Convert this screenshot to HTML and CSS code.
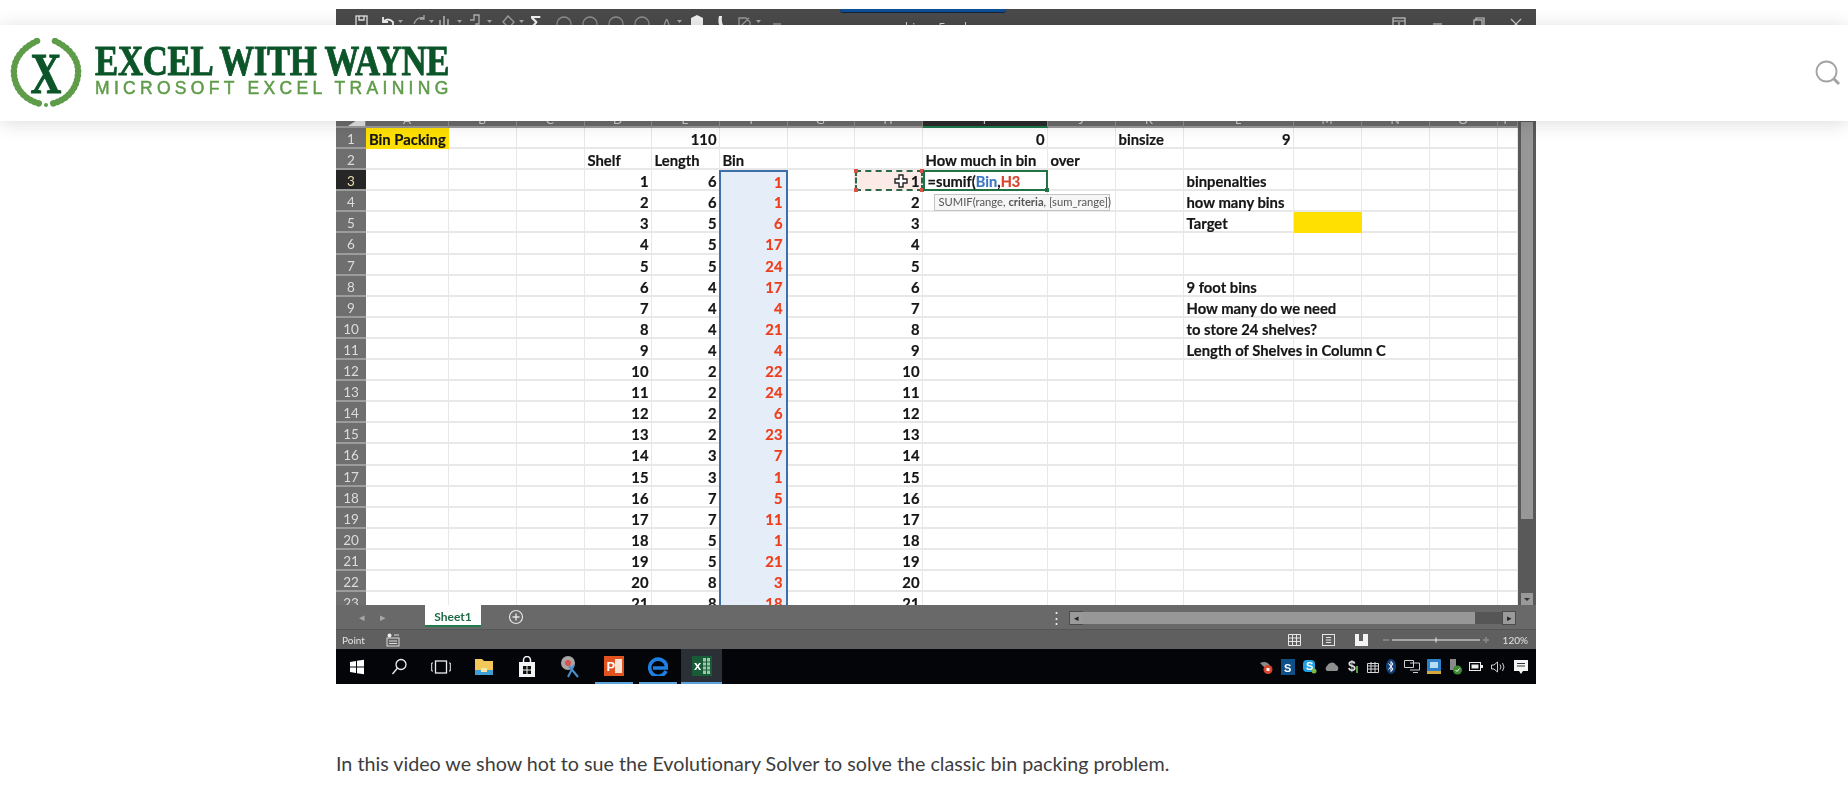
FILE: index.html
```html
<!DOCTYPE html>
<html lang="en">
<head>
    <meta charset="UTF-8">
    <title>Bin Packing - Excel With Wayne</title>
    <link rel="stylesheet" href="styles.css">
</head>
<body>
    <!-- Site header -->
    <header class="site-header">
        <a class="logo">
            <svg class="logo-mark" width="72" height="70" viewBox="0 0 72 70">
                <path class="wreath-stem" d="M27 3 C8 12 3 26 4 36 C5 50 14 62 31 66"/>
                <path class="wreath-stem" d="M45 3 C64 12 69 26 68 36 C67 50 58 62 41 66"/>
                <path class="wreath" d="M27 3 C8 12 3 26 4 36 C5 50 14 62 31 66"/>
                <path class="wreath" d="M45 3 C64 12 69 26 68 36 C67 50 58 62 41 66"/>
                <circle cx="36" cy="67" r="2" fill="#5f9c4a"/>
                <text class="logo-x" transform="translate(36 55) scale(0.75 1)" text-anchor="middle">X</text>
            </svg>
            <span class="logo-text">
                <span class="logo-name">EXCEL WITH WAYNE</span>
                <span class="logo-tag">MICROSOFT EXCEL TRAINING</span>
            </span>
        </a>
        <button class="search-btn" aria-label="Search">
            <svg width="26" height="26" viewBox="0 0 26 26">
                <circle cx="11.5" cy="11.5" r="10" fill="none" stroke="#a3a3a3" stroke-width="1.8"/>
                <path d="M18.5 18.5 L24 24" stroke="#a3a3a3" stroke-width="3"/>
            </svg>
        </button>
    </header>

    <main class="content">
        <!-- Video frame: Excel window -->
        <div class="video">
            <div class="titlebar">
                <svg class="qat" width="450" height="20" viewBox="0 0 450 20">
                    <g fill="none" stroke="#8e8e8e" stroke-width="1.3">
                        <rect x="20" y="7" width="11" height="12" stroke="#e4e4e4"/>
                        <path d="M23 7 v4 h5 v-4" stroke="#e4e4e4"/>
                        <path d="M47 13 q5 -5 10 0 v4 M47 8 v5 h5" stroke="#f0f0f0" stroke-width="1.8"/>
                        <path d="M88 9 q-7 -2 -10 6 M88 6 v4 h-4" stroke="#a8a8a8"/>
                        <path d="M104 11 v8 M108 7 v12 M112 10 v9" stroke="#a8a8a8" stroke-width="1.8"/>
                        <path d="M134 11 h4 v-5 h5 v9 h-3 v4" stroke="#b0b0b0"/>
                        <path d="M172 7 l6 6 l-5 6 l-6 -6 z" stroke="#a0a0a0"/>
                        <circle cx="228" cy="15" r="7"/>
                        <circle cx="254" cy="15" r="7"/>
                        <circle cx="280" cy="15" r="7"/>
                        <circle cx="306" cy="15" r="7"/>
                        <path d="M403 9 h7 l4 4 v6 h-11 z M404 18 l9 -9" stroke="#9a9a9a"/>
                    </g>
                    <path d="M62 11 h5 l-2.500 3 z M93 11 h5 l-2.500 3 z M121 11 h5 l-2.500 3 z M151 11 h5 l-2.500 3 z M183 11 h5 l-2.500 3 z M341 11 h5 l-2.500 3 z M420 11 h5 l-2.500 3 z" fill="#a8a8a8"/>
                    <text class="qat-sigma" x="194" y="20">Σ</text>
                    <text class="qat-a" x="326" y="20">A</text>
                    <path d="M355 9 l6 -3 l6 3 v9 h-12 z" fill="#f0f0f0"/>
                    <path d="M383 7 q-2 7 2 12 l3 -1 q-3 -5 -2 -11 z" fill="#f0f0f0"/>
                    <path d="M437 15 h8 M437 18 h8" stroke="#b8b8b8"/>
                </svg>
                <span class="doc-title">bins - Excel</span>
                <svg class="win-btns" width="150" height="20" viewBox="0 0 150 20">
                    <g fill="none" stroke="#c9c9c9" stroke-width="1.2">
                        <rect x="9" y="9" width="12" height="11"/>
                        <path d="M9 12 h12 M15 13 v6"/>
                        <path d="M49 15 h9"/>
                        <rect x="90" y="11" width="8" height="8"/>
                        <path d="M92 11 v-2 h8 v8 h-2"/>
                        <path d="M127 10 l10 10 M137 10 l-10 10"/>
                    </g>
                </svg>
            </div>
            <div class="ribbon"></div>

            <div class="sheet-wrap">
                <div class="sheet">
                    <div class="colheads">
                        <span class="corner"></span>
                        <span>A</span><span>B</span><span>C</span><span>D</span><span>E</span><span>F</span><span>G</span><span>H</span>
                        <span class="active">I</span>
                        <span>J</span><span>K</span><span>L</span><span>M</span><span>N</span><span>O</span><span>P</span>
                    </div>
                    <div class="rows">
                        <div class="gridlines">
                            <i></i><i></i><i></i><i></i><i></i><i></i><i></i><i></i><i></i><i></i><i></i><i></i><i></i><i></i><i></i><i></i><i></i>
                        </div>
                        <div class="row"><span class="rh">1</span><span class="c-a title-cell">Bin Packing</span><span class="c-e num">110</span><span class="c-i num">0</span><span class="c-k">binsize</span><span class="c-l num">9</span></div>
                        <div class="row"><span class="rh">2</span><span class="c-d">Shelf</span><span class="c-e">Length</span><span class="c-f">Bin</span><span class="c-i">How much in bin</span><span class="c-j">over</span></div>
                        <div class="row"><span class="rh active">3</span><span class="c-d num">1</span><span class="c-e num">6</span><span class="c-f bin first">1</span>
                            <span class="c-h num copied">1
                                <svg class="cell-cursor" width="14" height="14" viewBox="0 0 14 14"><path d="M5 1 h4 v4 h4 v4 h-4 v4 h-4 v-4 h-4 v-4 h4 z" fill="#fff" stroke="#222" stroke-width="1.4"/></svg>
                            </span>
                            <span class="c-i editing">=sumif(<span class="ref-blue">Bin</span>,<span class="ref-red">H3</span>
                                <span class="fn-tip">SUMIF(range, <b>criteria</b>, [sum_range])</span>
                            </span>
                            <span class="c-l">binpenalties</span></div>
                        <div class="row"><span class="rh">4</span><span class="c-d num">2</span><span class="c-e num">6</span><span class="c-f bin">1</span><span class="c-h num">2</span><span class="c-l">how many bins</span></div>
                        <div class="row"><span class="rh">5</span><span class="c-d num">3</span><span class="c-e num">5</span><span class="c-f bin">6</span><span class="c-h num">3</span><span class="c-l">Target</span><span class="c-m target"></span></div>
                        <div class="row"><span class="rh">6</span><span class="c-d num">4</span><span class="c-e num">5</span><span class="c-f bin">17</span><span class="c-h num">4</span></div>
                        <div class="row"><span class="rh">7</span><span class="c-d num">5</span><span class="c-e num">5</span><span class="c-f bin">24</span><span class="c-h num">5</span></div>
                        <div class="row"><span class="rh">8</span><span class="c-d num">6</span><span class="c-e num">4</span><span class="c-f bin">17</span><span class="c-h num">6</span><span class="c-l">9 foot bins</span></div>
                        <div class="row"><span class="rh">9</span><span class="c-d num">7</span><span class="c-e num">4</span><span class="c-f bin">4</span><span class="c-h num">7</span><span class="c-l">How many do we need</span></div>
                        <div class="row"><span class="rh">10</span><span class="c-d num">8</span><span class="c-e num">4</span><span class="c-f bin">21</span><span class="c-h num">8</span><span class="c-l">to store 24 shelves?</span></div>
                        <div class="row"><span class="rh">11</span><span class="c-d num">9</span><span class="c-e num">4</span><span class="c-f bin">4</span><span class="c-h num">9</span><span class="c-l">Length of Shelves in Column C</span></div>
                        <div class="row"><span class="rh">12</span><span class="c-d num">10</span><span class="c-e num">2</span><span class="c-f bin">22</span><span class="c-h num">10</span></div>
                        <div class="row"><span class="rh">13</span><span class="c-d num">11</span><span class="c-e num">2</span><span class="c-f bin">24</span><span class="c-h num">11</span></div>
                        <div class="row"><span class="rh">14</span><span class="c-d num">12</span><span class="c-e num">2</span><span class="c-f bin">6</span><span class="c-h num">12</span></div>
                        <div class="row"><span class="rh">15</span><span class="c-d num">13</span><span class="c-e num">2</span><span class="c-f bin">23</span><span class="c-h num">13</span></div>
                        <div class="row"><span class="rh">16</span><span class="c-d num">14</span><span class="c-e num">3</span><span class="c-f bin">7</span><span class="c-h num">14</span></div>
                        <div class="row"><span class="rh">17</span><span class="c-d num">15</span><span class="c-e num">3</span><span class="c-f bin">1</span><span class="c-h num">15</span></div>
                        <div class="row"><span class="rh">18</span><span class="c-d num">16</span><span class="c-e num">7</span><span class="c-f bin">5</span><span class="c-h num">16</span></div>
                        <div class="row"><span class="rh">19</span><span class="c-d num">17</span><span class="c-e num">7</span><span class="c-f bin">11</span><span class="c-h num">17</span></div>
                        <div class="row"><span class="rh">20</span><span class="c-d num">18</span><span class="c-e num">5</span><span class="c-f bin">1</span><span class="c-h num">18</span></div>
                        <div class="row"><span class="rh">21</span><span class="c-d num">19</span><span class="c-e num">5</span><span class="c-f bin">21</span><span class="c-h num">19</span></div>
                        <div class="row"><span class="rh">22</span><span class="c-d num">20</span><span class="c-e num">8</span><span class="c-f bin">3</span><span class="c-h num">20</span></div>
                        <div class="row"><span class="rh">23</span><span class="c-d num">21</span><span class="c-e num">8</span><span class="c-f bin">18</span><span class="c-h num">21</span></div>
                    </div>
                </div>
                <div class="vscroll">
                    <div class="vthumb"></div>
                    <div class="vbtn"></div>
                </div>
            </div>

            <!-- Sheet tabs -->
            <div class="tabbar">
                <span class="tab-arrow">&#9666;</span>
                <span class="tab-arrow">&#9656;</span>
                <span class="tab">Sheet1</span>
                <svg class="tab-add" width="16" height="16" viewBox="0 0 16 16">
                    <circle cx="8" cy="8" r="6.5" fill="none" stroke="#e4e4e4" stroke-width="1.2"/>
                    <path d="M8 4.5 v7 M4.5 8 h7" stroke="#e4e4e4" stroke-width="1.4"/>
                </svg>
                <span class="tab-dots">&#8942;</span>
                <div class="hscroll">
                    <span class="hbtn">&#9666;</span>
                    <span class="hthumb"></span>
                    <span class="htrack"></span>
                    <span class="hbtn">&#9656;</span>
                </div>
            </div>

            <!-- Status bar -->
            <div class="statusbar">
                <span class="status-text">Point</span>
                <svg class="macro" width="14" height="14" viewBox="0 0 14 14">
                    <rect x="1" y="5" width="12" height="8" fill="none" stroke="#ddd"/>
                    <circle cx="3.5" cy="2.5" r="2" fill="#eee"/>
                    <path d="M8 2 h5 M3 8 h8 M3 10.5 h8" stroke="#ddd"/>
                </svg>
                <svg class="view-btns" width="90" height="14" viewBox="0 0 90 14">
                    <g fill="none" stroke="#e6e6e6">
                        <path d="M0.5 1.5 h12 v11 h-12 z M0.5 5 h12 M0.5 8.5 h12 M4.5 1.5 v11 M8.5 1.5 v11"/>
                        <rect x="34.5" y="1.5" width="12" height="11"/>
                        <path d="M38 4.5 h5 M38 7 h5 M38 9.5 h5"/>
                    </g>
                    <path d="M67 1 h13 v12 h-13 z M71 1 v7 h4 v-7 z" fill="#f3f3f3" fill-rule="evenodd"/>
                </svg>
                <svg class="zoom-slider" width="106" height="14" viewBox="0 0 106 14">
                    <path d="M0 7 h6 M100 7 h6 M103 4 v6" stroke="#8d8d8d" stroke-width="1.4"/>
                    <path d="M9 7 h88" stroke="#eee" stroke-width="1.2"/>
                    <path d="M53 4.5 v5" stroke="#eee"/>
                </svg>
                <span class="status-text zoom-pct">120%</span>
            </div>

            <!-- Windows taskbar -->
            <div class="taskbar">
                <svg width="16" height="16" viewBox="0 0 16 16"><path d="M1 3 l6 -1 v5.5 h-6 z M8 1.8 l7 -1 v6.7 h-7 z M1 8.5 h6 v5.5 l-6 -1 z M8 8.5 h7 v6.7 l-7 -1 z" fill="#fff"/></svg>
                <svg width="16" height="18" viewBox="0 0 16 18"><circle cx="10" cy="6.5" r="5" fill="none" stroke="#eee" stroke-width="1.3"/><path d="M6.5 10 L1.5 16" stroke="#eee" stroke-width="1.3"/></svg>
                <svg width="20" height="14" viewBox="0 0 20 14"><rect x="4.5" y="1" width="11" height="12" fill="none" stroke="#eee" stroke-width="1.3"/><path d="M2 3 h-1.3 v8 h1.3 M18 3 h1.3 v8 h-1.3" fill="none" stroke="#eee"/></svg>
                <svg width="20" height="18" viewBox="0 0 20 18"><path d="M1 1 h7 l2 2 h9 v14 h-18 z" fill="#f3c75a"/><rect x="1" y="12" width="18" height="5" fill="#3fa0d8"/><rect x="7" y="10" width="6" height="4" fill="#f7e6a5"/></svg>
                <svg width="18" height="22" viewBox="0 0 18 22"><path d="M1 6 h16 v15 h-16 z" fill="#f4f4f4"/><path d="M5.5 6 v-2 a3.5 3.5 0 0 1 7 0 v2" fill="none" stroke="#f4f4f4" stroke-width="1.5"/><path d="M5 10 h3.5 v3.5 h-3.5 z M9.5 10 h3.5 v3.5 h-3.5 z M5 14.5 h3.5 v3.5 h-3.5 z M9.5 14.5 h3.5 v3.5 h-3.5 z" fill="#111"/></svg>
                <svg width="22" height="24" viewBox="0 0 22 24"><circle cx="9" cy="8" r="7" fill="#a9a4a6"/><circle cx="9" cy="8" r="3" fill="#d8514a"/><path d="M10 11 L19 22 M15 10 L9 22" stroke="#4a8fc9" stroke-width="2"/></svg>
                <span class="tb-open">
                    <svg width="20" height="20" viewBox="0 0 20 20"><rect width="20" height="20" fill="#e0521f"/><rect x="11" y="3" width="7" height="14" fill="#f9e2d6"/><text class="tb-letter" x="2.5" y="15">P</text></svg>
                </span>
                <span class="tb-open">
                    <svg width="20" height="20" viewBox="0 0 20 20"><path d="M18 15 a8.5 8.5 0 1 1 0.5 -5 V12 H5" fill="none" stroke="#1f7fe0" stroke-width="3.5"/></svg>
                </span>
                <span class="tb-open tb-current">
                    <svg width="20" height="20" viewBox="0 0 20 20"><rect width="20" height="20" fill="#185c37"/><rect x="11" y="2" width="7" height="16" fill="#9cc7a9"/><path d="M11 6 h7 M11 10 h7 M11 14 h7 M14.5 2 v16" stroke="#185c37"/><text class="tb-letter" x="2" y="14">x</text></svg>
                </span>
                <div class="tray">
                    <svg width="14" height="14" viewBox="0 0 14 14"><path d="M1 3 q7 -3 10 3 l-5 2 z" fill="#8a8a8a"/><circle cx="9" cy="9.5" r="4.5" fill="#d8442f"/><rect x="7.5" y="8" width="3" height="3" fill="#fff"/></svg>
                    <svg width="14" height="16" viewBox="0 0 14 16"><rect width="14" height="16" fill="#0f4f88"/><text class="tray-s" x="3" y="13">S</text></svg>
                    <svg width="15" height="15" viewBox="0 0 15 15"><rect x="1" y="1" width="12" height="12" rx="4" fill="#1fa2e0"/><text class="tray-s" x="4" y="11">S</text><circle cx="12" cy="12" r="2.5" fill="#7ab648"/></svg>
                    <svg width="16" height="11" viewBox="0 0 16 11"><path d="M3 10 a3 3 0 0 1 0 -5 a5 5 0 0 1 9 -1 a3.5 3.5 0 0 1 1 6 z" fill="#8f8f8f"/></svg>
                    <svg width="12" height="15" viewBox="0 0 12 15"><text class="tray-dollar" x="0" y="12">$</text><path d="M9 14 v-7" stroke="#5a9a4a" stroke-width="2"/></svg>
                    <svg width="12" height="12" viewBox="0 0 12 12"><path d="M.5 2.5 h11 v9 h-11 z M.5 5 h11 M.5 8 h11 M4 1 v10.5 M8 1 v10.5" fill="none" stroke="#d8d8d8"/></svg>
                    <svg width="10" height="15" viewBox="0 0 10 15"><ellipse cx="5" cy="7.5" rx="5" ry="7.5" fill="#123f7a"/><path d="M2.5 4.5 L7 10 L5 12.5 V2.5 L7 5 L2.5 10.5" fill="none" stroke="#fff"/></svg>
                    <svg width="16" height="13" viewBox="0 0 16 13"><path d="M.5 .5 h9 v7 h-9 z M6 3 h9.5 v7 h-9.5 M9 12.5 h5" fill="none" stroke="#cfcfcf"/></svg>
                    <svg width="14" height="15" viewBox="0 0 14 15"><rect width="14" height="15" rx="1" fill="#2f7fc8"/><rect x="3" y="3" width="8" height="6" fill="#b8dcf2"/><rect y="12" width="14" height="3" fill="#d8a63a"/></svg>
                    <svg width="14" height="16" viewBox="0 0 14 16"><rect x="2" width="6" height="11" fill="#8a8a8a"/><circle cx="9.5" cy="11" r="4.5" fill="#3f8a35"/><path d="M7.5 11 l1.5 1.5 l2.5 -3" stroke="#fff" fill="none"/></svg>
                    <svg width="14" height="9" viewBox="0 0 14 9"><rect x=".5" y=".5" width="11" height="8" fill="none" stroke="#eee"/><rect x="2.5" y="2.5" width="7" height="4" fill="#eee"/><rect x="12" y="3" width="2" height="3" fill="#eee"/></svg>
                    <svg width="15" height="12" viewBox="0 0 15 12"><path d="M.5 4 h2.5 l3.5 -3 v10 l-3.5 -3 h-2.5 z M9 3.5 q2 2.5 0 5 M11.5 2 q3 4 0 8" fill="none" stroke="#cfcfcf"/></svg>
                    <svg width="16" height="16" viewBox="0 0 16 16"><path d="M1 1 h14 v11 h-5 l-2 3 l-2 -3 h-5 z" fill="#f5f5f5"/><path d="M4 4.5 h8 M4 7 h8" stroke="#333"/></svg>
                </div>
            </div>
        </div>

        <p class="post-text">In this video we show hot to sue the Evolutionary Solver to solve the classic bin packing problem.</p>
    </main>
</body>
</html>
```

FILE: styles.css
```css
body {
    margin: 0;
    background-color: #fff;
    font-family: Lato, "Open Sans", sans-serif;
    font-variant-ligatures: none;
    color: #3d3d3d;
}

/* Site header */
.site-header {
    position: fixed;
    top: 25px;
    left: 0;
    right: 0;
    z-index: 5;
    height: 96px;
    display: flex;
    align-items: center;
    justify-content: space-between;
    background-color: #fff;
    box-shadow: 0 2px 18px rgba(0, 0, 0, 0.14);
}
.logo {
    display: flex;
    align-items: center;
    gap: 13px;
    margin-left: 10px;
    filter: blur(0.4px);
}
.wreath-stem {
    fill: none;
    stroke: #8dbb78;
    stroke-width: 2.5;
}
.wreath {
    fill: none;
    stroke: #5f9c4a;
    stroke-width: 6.5;
    stroke-linecap: round;
    stroke-dasharray: 0.4 4;
}
.logo-x {
    font-family: "Liberation Serif", serif;
    font-weight: 700;
    font-size: 57px;
    fill: #0b5529;
    stroke: #0b5529;
    stroke-width: 1;
}
.logo-text {
    display: flex;
    flex-direction: column;
    gap: 4.5px;
    margin-bottom: 5px;
}
.logo-name {
    font-family: "Liberation Serif", serif;
    font-weight: 700;
    font-size: 43px;
    line-height: 30px;
    letter-spacing: -0.4px;
    color: #0b5529;
    -webkit-text-stroke: 0.9px #0b5529;
    white-space: nowrap;
    transform: scaleX(0.81);
    transform-origin: left;
}
.logo-tag {
    font-family: "Liberation Sans", sans-serif;
    font-weight: 400;
    font-size: 17.5px;
    line-height: 14px;
    letter-spacing: 4.3px;
    color: #5f9c4a;
    -webkit-text-stroke: 0.5px #5f9c4a;
    white-space: nowrap;
}
.search-btn {
    background: none;
    border: none;
    padding: 0;
    margin-right: 7px;
    display: flex;
}

/* Page content */
.content {
    width: 1200px;
    margin-left: 336px;
    padding-top: 9px;
}
.post-text {
    margin: 68px 0 0;
    font-size: 19.7px;
    line-height: 24px;
}

/* Video frame */
.video {
    height: 675px;
    display: flex;
    flex-direction: column;
    overflow: hidden;
    background-color: #4a4a4a;
    filter: blur(0.45px);
}
.titlebar {
    position: relative;
    flex: none;
    height: 30px;
    display: grid;
    grid-template-columns: 1fr auto 1fr;
    align-items: start;
    background-color: #4a4a4a;
}
.titlebar::before {
    content: "";
    position: absolute;
    top: 0;
    left: 504px;
    width: 166px;
    height: 3px;
    background-color: #0e4f96;
    border-bottom: 1px solid #14233c;
    border-radius: 0 0 3px 3px;
}
.qat-sigma {
    font-family: "Liberation Sans", sans-serif;
    font-size: 19px;
    font-weight: 700;
    fill: #f0f0f0;
}
.qat-a {
    font-family: "Liberation Sans", sans-serif;
    font-size: 14px;
    fill: #a0a0a0;
}
.doc-title {
    font-family: "Open Sans", sans-serif;
    font-size: 12px;
    line-height: 16px;
    margin-top: 11px;
    color: #d8d8d8;
}
.win-btns {
    justify-self: end;
    margin-right: 2px;
}
.ribbon {
    flex: 1;
    background-color: #5e5e5e;
}

/* Spreadsheet */
.sheet-wrap {
    flex: none;
    height: 497px;
    display: flex;
}
.sheet {
    flex: 1;
    min-width: 0;
    overflow: hidden;
    display: flex;
    flex-direction: column;
    background-color: #fff;
}
.colheads,
.gridlines,
.row {
    display: grid;
    grid-template-columns: 30px 83px 67.5px 68px 67px 68px 68px 67px 68px 125px 68px 68px 110px 68px 68px 68px 20px;
}
.colheads {
    flex: none;
    height: 20px;
    grid-template-rows: 20px;
    overflow: hidden;
    background-color: #6b6b6b;
    color: #cfcfcf;
    font-size: 12px;
    box-shadow: inset 0 -2px 0 #999;
}
.colheads span {
    overflow: hidden;
    text-align: center;
    line-height: 24px;
    border-right: 1px solid #8d8d8d;
}
.colheads .active {
    box-sizing: border-box;
    background-color: #2b2b2b;
    border-bottom: 2px solid #1f7a4d;
}
.corner {
    background-color: #e0e0e0;
    clip-path: polygon(100% 30%, 100% 90%, 40% 90%);
}
.rows {
    position: relative;
    flex: 1;
    overflow: hidden;
    font-size: 14.8px;
    font-weight: 700;
    color: #161616;
    -webkit-text-stroke: 0.2px #161616;
}
.gridlines {
    position: absolute;
    inset: 0;
}
.gridlines i {
    border-right: 1.5px solid #e8e8e8;
}
.row {
    position: relative;
    height: 21.1px;
    line-height: 23px;
    white-space: nowrap;
    background: linear-gradient(#e8e8e8, #e8e8e8) bottom / 100% 2px no-repeat;
}
.row > span {
    grid-row: 1;
    min-width: 0;
    height: 21.1px;
    box-sizing: border-box;
    padding: 0 3px;
}
.rh {
    grid-column: 1;
    text-align: center;
    font-weight: 400;
    font-size: 13.5px;
    color: #dcdcdc;
    -webkit-text-stroke: 0;
    background-color: #6f6f6f;
    border-bottom: 2px solid #9c9c9c;
}
.row > .rh {
    padding: 0;
}
.rh.active {
    background-color: #262626;
    color: #eadbb0;
}
.c-a { grid-column: 2; }
.c-d { grid-column: 5; }
.c-e { grid-column: 6; }
.c-f { grid-column: 7; }
.c-h { grid-column: 9; }
.c-i { grid-column: 10; }
.c-j { grid-column: 11; }
.c-k { grid-column: 12; }
.c-l { grid-column: 13; }
.c-m { grid-column: 14; }
.num {
    text-align: right;
}
.title-cell {
    background-color: #ffe000;
}
.target {
    background-color: #ffe000;
}
.bin {
    text-align: right;
    color: #ee3e1c;
    -webkit-text-stroke: 0.2px #ee3e1c;
    background-color: #e5edf9;
    border-left: 2px solid #3f6fa8;
    border-right: 2px solid #3f6fa8;
    margin-left: -1px;
}
.bin.first {
    border-top: 2px solid #3f6fa8;
    line-height: 21px;
}

/* Cell being copied and formula being typed */
.copied {
    position: relative;
    background-color: #fbeae6;
    outline: 2px dashed #2a6a48;
    outline-offset: -2px;
}
.copied::after {
    content: "";
    position: absolute;
    inset: -1px;
    background:
        linear-gradient(#d9534a, #d9534a) left top / 4px 4px no-repeat,
        linear-gradient(#d9534a, #d9534a) right top / 4px 4px no-repeat,
        linear-gradient(#d9534a, #d9534a) left bottom / 4px 4px no-repeat,
        linear-gradient(#d9534a, #d9534a) right bottom / 4px 4px no-repeat;
}
.cell-cursor {
    position: absolute;
    top: 4px;
    right: 15px;
}
.editing {
    position: relative;
    font-size: 14.6px;
    border: 2px solid #217346;
    line-height: 19px;
}
.editing::after {
    content: "";
    position: absolute;
    right: -3px;
    bottom: -3px;
    width: 4px;
    height: 4px;
    background-color: #217346;
}
.ref-blue {
    color: #3f78c0;
    -webkit-text-stroke: 0.2px #3f78c0;
}
.ref-red {
    color: #d8452f;
    -webkit-text-stroke: 0.2px #d8452f;
}
.fn-tip {
    position: absolute;
    top: 22px;
    left: 9px;
    z-index: 2;
    box-sizing: border-box;
    width: 176px;
    height: 17px;
    padding: 0 4px;
    line-height: 14px;
    font-size: 11.2px;
    font-weight: 400;
    color: #555;
    -webkit-text-stroke: 0;
    background-color: #f6f6f6;
    border: 1px solid #c4c4c4;
}

/* Vertical scrollbar */
.vscroll {
    flex: none;
    width: 18.5px;
    display: flex;
    flex-direction: column;
    align-items: center;
    justify-content: space-between;
    padding-top: 14px;
    box-sizing: border-box;
    background-color: #595959;
}
.vthumb {
    width: 12px;
    height: 397px;
    background-color: #979797;
}
.vbtn {
    width: 12px;
    height: 12px;
    background-color: #999;
    position: relative;
}
.vbtn::after {
    content: "";
    position: absolute;
    left: 3px;
    top: 5px;
    border: 3px solid transparent;
    border-top-color: #333;
}

/* Sheet tabs */
.tabbar {
    flex: none;
    height: 24px;
    display: flex;
    align-items: flex-start;
    background-color: #696969;
    color: #a8a8a8;
}
.tab-arrow {
    font-size: 11px;
    line-height: 24px;
    margin-left: 23px;
}
.tab-arrow + .tab-arrow {
    margin-left: 15px;
}
.tab {
    margin-left: 39px;
    width: 56px;
    height: 20px;
    text-align: center;
    font-size: 12px;
    font-weight: 700;
    line-height: 23px;
    color: #1f6b45;
    background-color: #fff;
    border-bottom: 2px solid #1f7a4d;
}
.tab-add {
    margin: 4px 0 0 27px;
}
.tab-dots {
    margin-left: 525px;
    line-height: 24px;
    font-size: 15px;
    color: #eee;
}
.hscroll {
    display: flex;
    margin: 7px 0 0 6px;
    height: 12px;
}
.hbtn {
    width: 12px;
    font-size: 9px;
    line-height: 12px;
    text-align: center;
    color: #222;
    background-color: #9a9a9a;
    box-shadow: 0 0 0 1px #4c4c4c;
}
.hthumb {
    width: 393px;
    background-color: #979797;
}
.htrack {
    width: 28px;
    background-color: #565656;
}

/* Status bar */
.statusbar {
    flex: none;
    height: 20px;
    display: flex;
    align-items: center;
    padding-right: 8px;
    box-sizing: border-box;
    background-color: #5f5f5f;
    border-top: 1px solid #555;
}
.status-text {
    margin-left: 6px;
    font-size: 10px;
    color: #e2e2e2;
}
.macro {
    margin-left: 21px;
}
.view-btns {
    margin-left: auto;
}
.zoom-slider {
    margin-left: 5px;
}
.zoom-pct {
    margin-left: 14px;
}

/* Windows taskbar */
.taskbar {
    flex: none;
    height: 35px;
    display: grid;
    grid-template-columns: 42px 41px 43px 44px 42px 44px 44px 44px 43px 1fr;
    justify-items: center;
    align-items: center;
    background-color: #030509;
}
.tb-open {
    align-self: stretch;
    width: 38px;
    display: flex;
    align-items: center;
    justify-content: center;
    box-sizing: border-box;
    border-bottom: 2px solid #5da3dc;
}
.tb-current {
    width: 41px;
    background-color: #2b3036;
}
.tb-letter {
    font-family: "Liberation Sans", sans-serif;
    font-size: 13px;
    font-weight: 700;
    fill: #fff;
}
.tray {
    justify-self: end;
    display: flex;
    align-items: center;
    gap: 7.3px;
    margin-right: 7px;
}
.tray-s {
    font-family: "Liberation Sans", sans-serif;
    font-size: 11px;
    font-weight: 700;
    fill: #fff;
}
.tray-dollar {
    font-family: "Liberation Sans", sans-serif;
    font-size: 14px;
    font-weight: 700;
    fill: #ddd;
}
```
